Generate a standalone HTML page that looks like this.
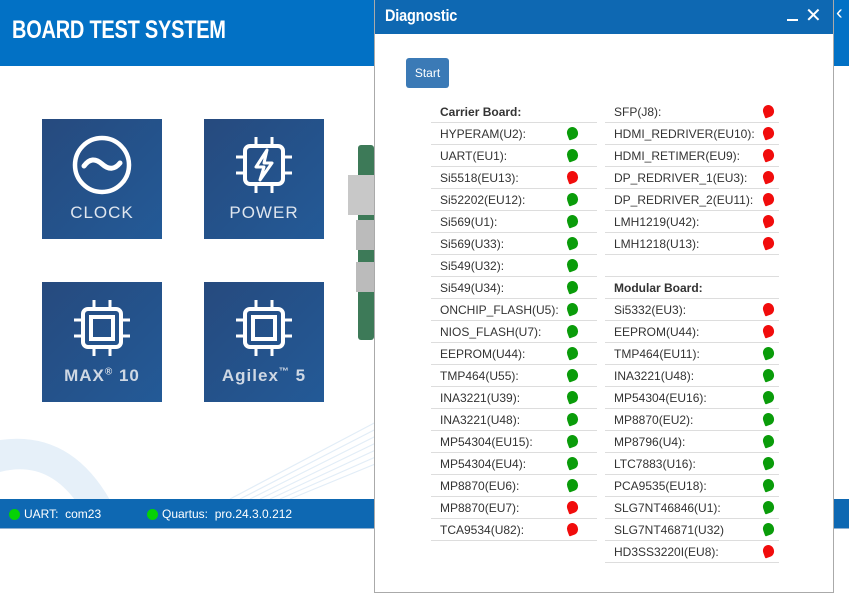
<!DOCTYPE html>
<html><head><meta charset="utf-8"><style>
*{margin:0;padding:0;box-sizing:border-box}
body{width:849px;height:615px;position:relative;overflow:hidden;background:#fff;font-family:"Liberation Sans",sans-serif}
.hdr{position:absolute;left:0;top:0;width:849px;height:66px;background:#0271c5}
.hdr h1{position:absolute;left:12px;top:16px;color:#fff;font-size:25px;font-weight:bold;letter-spacing:-0.3px;transform:scaleX(0.8);transform-origin:left;white-space:nowrap}
.tile{position:absolute;width:120px;height:120px;background:linear-gradient(135deg,#264a7e,#235a97);color:#dfe6ef;text-align:center}
.tile .lbl{position:absolute;left:0;right:0;top:84px;font-size:17px;letter-spacing:1px}
.tile svg{position:absolute;left:30px;top:16px}
.status{position:absolute;left:0;top:499px;width:849px;height:30px;background:#0e68b2;border-bottom:1px solid #8fb0d0;color:#fff;font-size:12px}
.status span{position:absolute;top:8px}
.gd{position:absolute;top:10px;width:11px;height:11px;border-radius:50%;background:#06d206}
.dlg{position:absolute;left:374px;top:0;width:460px;height:593px;background:#fff;border:1px solid #aaa;border-top:none}
.dt{height:34px;background:#0e68b2;color:#fff;position:relative}
.dt b{position:absolute;left:10px;top:6px;font-size:17px;letter-spacing:-0.2px;transform:scaleX(0.85);transform-origin:left}
.btn{position:absolute;left:31px;top:58px;width:43px;height:30px;background:#3b7ab6;border-radius:3px;color:#fff;font-size:12px;text-align:center;line-height:30px}
.col{position:absolute;top:101px}
.row{height:22px;border-bottom:1px solid #ddd;font-size:12px;color:#333;line-height:22px;padding-left:9px;position:relative}
.row.b{font-weight:bold}
.dot{position:absolute;top:4px;width:11px;height:12px;border-radius:50% 50% 50% 10%;transform:rotate(-20deg)}
.g{background:#0a9c0a}.r{background:#f10c0c}
</style></head><body>
<div class="hdr"><h1>BOARD TEST SYSTEM</h1></div>
<svg style="position:absolute;left:0;top:400px" width="380" height="100">
<path d="M0 40 Q70 30 110 100 L75 100 Q45 60 0 72Z" fill="#e6f0f9"/>
<g stroke="#e2edf7" stroke-width="1.2" fill="none">
<path d="M230 99 L380 20"/><path d="M240 99 L380 27"/><path d="M250 99 L380 34"/><path d="M260 99 L380 41"/><path d="M270 99 L380 48"/><path d="M280 99 L380 55"/><path d="M290 99 L380 62"/></g></svg>
<div style="position:absolute;left:358px;top:145px;width:16px;height:195px;background:#3d7a58;border-radius:3px"></div>
<div style="position:absolute;left:348px;top:175px;width:26px;height:40px;background:#c8c8c8"></div>
<div style="position:absolute;left:356px;top:220px;width:18px;height:30px;background:#bbb"></div>
<div style="position:absolute;left:356px;top:262px;width:18px;height:30px;background:#bbb"></div>
<div class="tile" style="left:42px;top:119px"><svg width="60" height="60" viewBox="0 0 60 60"><circle cx="30" cy="30" r="27" fill="none" stroke="#fff" stroke-width="4.5"/><path d="M12 31 Q20 20 30 29 Q40 38 48 28" fill="none" stroke="#fff" stroke-width="5" stroke-linecap="round"/></svg><div class="lbl">CLOCK</div></div>
<div class="tile" style="left:204px;top:119px"><svg width="60" height="60" viewBox="0 0 60 60"><rect x="11" y="11" width="38" height="38" rx="5" fill="none" stroke="#fff" stroke-width="4"/><g stroke="#fff" stroke-width="3"><path d="M22 2v9M38 2v9M22 49v9M38 49v9M2 22h9M2 38h9M49 22h9M49 38h9"/></g><path d="M33 15 L22 32 H30 L26 45 L38 28 H30 Z" fill="none" stroke="#fff" stroke-width="3" stroke-linejoin="round"/></svg><div class="lbl">POWER</div></div>
<div class="tile" style="left:42px;top:282px"><svg width="60" height="60" viewBox="0 0 60 60"><rect x="11" y="11" width="38" height="38" rx="5" fill="none" stroke="#fff" stroke-width="4"/><rect x="19" y="19" width="22" height="22" fill="none" stroke="#fff" stroke-width="4"/><g stroke="#fff" stroke-width="3"><path d="M22 2v9M38 2v9M22 49v9M38 49v9M2 22h9M2 38h9M49 22h9M49 38h9"/></g></svg><div class="lbl" style="font-weight:bold;color:#cfd8e4">MAX<sup style="font-size:10px">®</sup> 10</div></div>
<div class="tile" style="left:204px;top:282px"><svg width="60" height="60" viewBox="0 0 60 60"><rect x="11" y="11" width="38" height="38" rx="5" fill="none" stroke="#fff" stroke-width="4"/><rect x="19" y="19" width="22" height="22" fill="none" stroke="#fff" stroke-width="4"/><g stroke="#fff" stroke-width="3"><path d="M22 2v9M38 2v9M22 49v9M38 49v9M2 22h9M2 38h9M49 22h9M49 38h9"/></g></svg><div class="lbl" style="font-weight:bold;color:#cfd8e4">Agilex<sup style="font-size:10px">™</sup> 5</div></div>
<div class="status"><div class="gd" style="left:9px"></div><span style="left:24px">UART:&nbsp; com23</span><div class="gd" style="left:147px"></div><span style="left:162px">Quartus:&nbsp; pro.24.3.0.212</span></div>
<div style="position:absolute;left:836px;top:2px;color:#fff;font-size:20px">&lsaquo;</div>
<div class="dlg">
<div class="dt"><b>Diagnostic</b><span style="position:absolute;left:412px;width:11px;height:2px;background:#fff;top:19px"></span><span style="position:absolute;left:430px;top:3px;font-size:20px">✕</span></div>
<div class="btn">Start</div>
<div class="col" style="left:56px;width:166px">
<div class="row b">Carrier Board:</div>
<div class="row">HYPERAM(U2):<i class="dot g" style="left:136px"></i></div>
<div class="row">UART(EU1):<i class="dot g" style="left:136px"></i></div>
<div class="row">Si5518(EU13):<i class="dot r" style="left:136px"></i></div>
<div class="row">Si52202(EU12):<i class="dot g" style="left:136px"></i></div>
<div class="row">Si569(U1):<i class="dot g" style="left:136px"></i></div>
<div class="row">Si569(U33):<i class="dot g" style="left:136px"></i></div>
<div class="row">Si549(U32):<i class="dot g" style="left:136px"></i></div>
<div class="row">Si549(U34):<i class="dot g" style="left:136px"></i></div>
<div class="row">ONCHIP_FLASH(U5):<i class="dot g" style="left:136px"></i></div>
<div class="row">NIOS_FLASH(U7):<i class="dot g" style="left:136px"></i></div>
<div class="row">EEPROM(U44):<i class="dot g" style="left:136px"></i></div>
<div class="row">TMP464(U55):<i class="dot g" style="left:136px"></i></div>
<div class="row">INA3221(U39):<i class="dot g" style="left:136px"></i></div>
<div class="row">INA3221(U48):<i class="dot g" style="left:136px"></i></div>
<div class="row">MP54304(EU15):<i class="dot g" style="left:136px"></i></div>
<div class="row">MP54304(EU4):<i class="dot g" style="left:136px"></i></div>
<div class="row">MP8870(EU6):<i class="dot g" style="left:136px"></i></div>
<div class="row">MP8870(EU7):<i class="dot r" style="left:136px"></i></div>
<div class="row">TCA9534(U82):<i class="dot r" style="left:136px"></i></div>
</div>
<div class="col" style="left:230px;width:174px">
<div class="row">SFP(J8):<i class="dot r" style="left:158px"></i></div>
<div class="row">HDMI_REDRIVER(EU10):<i class="dot r" style="left:158px"></i></div>
<div class="row">HDMI_RETIMER(EU9):<i class="dot r" style="left:158px"></i></div>
<div class="row">DP_REDRIVER_1(EU3):<i class="dot r" style="left:158px"></i></div>
<div class="row">DP_REDRIVER_2(EU11):<i class="dot r" style="left:158px"></i></div>
<div class="row">LMH1219(U42):<i class="dot r" style="left:158px"></i></div>
<div class="row">LMH1218(U13):<i class="dot r" style="left:158px"></i></div>
<div class="row"></div>
<div class="row b">Modular Board:</div>
<div class="row">Si5332(EU3):<i class="dot r" style="left:158px"></i></div>
<div class="row">EEPROM(U44):<i class="dot r" style="left:158px"></i></div>
<div class="row">TMP464(EU11):<i class="dot g" style="left:158px"></i></div>
<div class="row">INA3221(U48):<i class="dot g" style="left:158px"></i></div>
<div class="row">MP54304(EU16):<i class="dot g" style="left:158px"></i></div>
<div class="row">MP8870(EU2):<i class="dot g" style="left:158px"></i></div>
<div class="row">MP8796(U4):<i class="dot g" style="left:158px"></i></div>
<div class="row">LTC7883(U16):<i class="dot g" style="left:158px"></i></div>
<div class="row">PCA9535(EU18):<i class="dot g" style="left:158px"></i></div>
<div class="row">SLG7NT46846(U1):<i class="dot g" style="left:158px"></i></div>
<div class="row">SLG7NT46871(U32)<i class="dot g" style="left:158px"></i></div>
<div class="row">HD3SS3220I(EU8):<i class="dot r" style="left:158px"></i></div>
</div>
</div>
</body></html>
